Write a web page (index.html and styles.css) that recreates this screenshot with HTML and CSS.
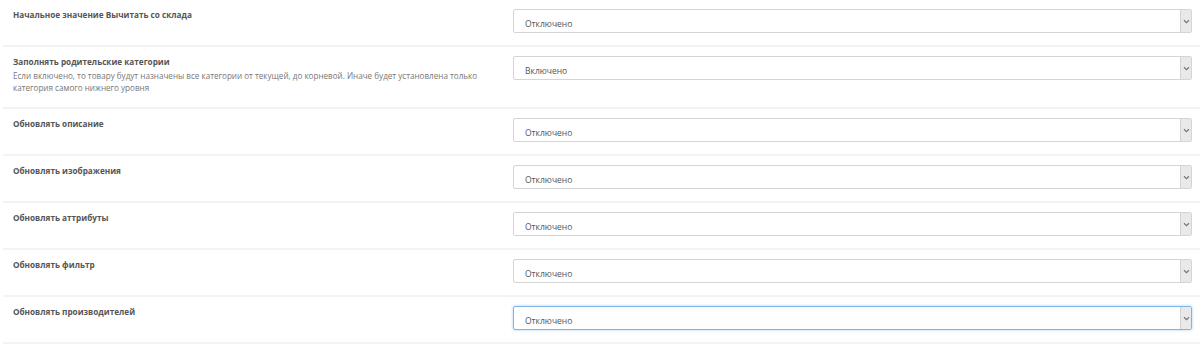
FILE: index.html
```html
<!DOCTYPE html>
<html lang="ru">
<head>
    <meta charset="UTF-8">
    <title>Настройки импорта</title>
    <link rel="stylesheet" href="styles.css">
</head>
<body>
    <div class="settings">
        <div class="form-row">
            <div class="label-col">
                <div class="title">Начальное значение Вычитать со склада</div>
            </div>
            <div class="field">
                <select><option>Отключено</option><option>Включено</option></select>
                <span class="caret"><svg width="7" height="5" viewBox="0 0 7 5"><path d="M1 1.2 L3.5 3.6 L6 1.2" fill="none" stroke="#777" stroke-width="1.2"/></svg></span>
            </div>
        </div>

        <div class="form-row">
            <div class="label-col">
                <div class="title">Заполнять родительские категории</div>
                <div class="help">Если включено, то товару будут назначены все категории от текущей, до корневой. Иначе будет установлена только категория самого нижнего уровня</div>
            </div>
            <div class="field">
                <select><option>Включено</option><option>Отключено</option></select>
                <span class="caret"><svg width="7" height="5" viewBox="0 0 7 5"><path d="M1 1.2 L3.5 3.6 L6 1.2" fill="none" stroke="#777" stroke-width="1.2"/></svg></span>
            </div>
        </div>

        <div class="form-row">
            <div class="label-col">
                <div class="title">Обновлять описание</div>
            </div>
            <div class="field">
                <select><option>Отключено</option><option>Включено</option></select>
                <span class="caret"><svg width="7" height="5" viewBox="0 0 7 5"><path d="M1 1.2 L3.5 3.6 L6 1.2" fill="none" stroke="#777" stroke-width="1.2"/></svg></span>
            </div>
        </div>

        <div class="form-row">
            <div class="label-col">
                <div class="title">Обновлять изображения</div>
            </div>
            <div class="field">
                <select><option>Отключено</option><option>Включено</option></select>
                <span class="caret"><svg width="7" height="5" viewBox="0 0 7 5"><path d="M1 1.2 L3.5 3.6 L6 1.2" fill="none" stroke="#777" stroke-width="1.2"/></svg></span>
            </div>
        </div>

        <div class="form-row">
            <div class="label-col">
                <div class="title">Обновлять аттрибуты</div>
            </div>
            <div class="field">
                <select><option>Отключено</option><option>Включено</option></select>
                <span class="caret"><svg width="7" height="5" viewBox="0 0 7 5"><path d="M1 1.2 L3.5 3.6 L6 1.2" fill="none" stroke="#777" stroke-width="1.2"/></svg></span>
            </div>
        </div>

        <div class="form-row">
            <div class="label-col">
                <div class="title">Обновлять фильтр</div>
            </div>
            <div class="field">
                <select><option>Отключено</option><option>Включено</option></select>
                <span class="caret"><svg width="7" height="5" viewBox="0 0 7 5"><path d="M1 1.2 L3.5 3.6 L6 1.2" fill="none" stroke="#777" stroke-width="1.2"/></svg></span>
            </div>
        </div>

        <div class="form-row">
            <div class="label-col">
                <div class="title">Обновлять производителей</div>
            </div>
            <div class="field focused">
                <select><option>Отключено</option><option>Включено</option></select>
                <span class="caret"><svg width="7" height="5" viewBox="0 0 7 5"><path d="M1 1.2 L3.5 3.6 L6 1.2" fill="none" stroke="#777" stroke-width="1.2"/></svg></span>
            </div>
        </div>
    </div>
</body>
</html>
```

FILE: styles.css
```css
body {
    margin: 0;
    background: #fff;
    font-family: "Open Sans", Arial, sans-serif;
    color: #555;
}
.settings {
    padding-left: 3px;
}
.form-row {
    display: grid;
    grid-template-columns: 497px 1fr;
    padding: 9px 8px 12px 0;
    border-bottom: 2px solid #f3f3f3;
}
.label-col {
    padding-left: 10px;
}
.title {
    font-size: 8.2px;
    font-weight: 700;
    line-height: 12px;
    color: #555;
}
.help {
    font-size: 8.1px;
    line-height: 12px;
    color: #777;
    padding-top: 2px;
    margin-bottom: 1px;
    padding-right: 20px;
}
.field {
    position: relative;
    height: 24px;
    margin-left: 13px;
    box-sizing: border-box;
    border: 1px solid #d5d5d5;
    border-radius: 2px;
}
.field.focused {
    border-color: #7fb6e6;
    box-shadow: 0 0 3px rgba(102, 175, 233, 0.6);
}
.field select {
    appearance: none;
    -webkit-appearance: none;
    width: 100%;
    height: 100%;
    border: none;
    background: transparent;
    outline: none;
    padding: 0 0 0 11px;
    font-family: "Open Sans", Arial, sans-serif;
    font-size: 8.5px;
    color: #555;
}
.caret {
    position: absolute;
    top: 0;
    right: 0;
    bottom: 0;
    width: 10px;
    display: flex;
    align-items: center;
    justify-content: center;
    background: #e9e9e9;
    border-left: 1px solid #d2d2d2;
}
```
